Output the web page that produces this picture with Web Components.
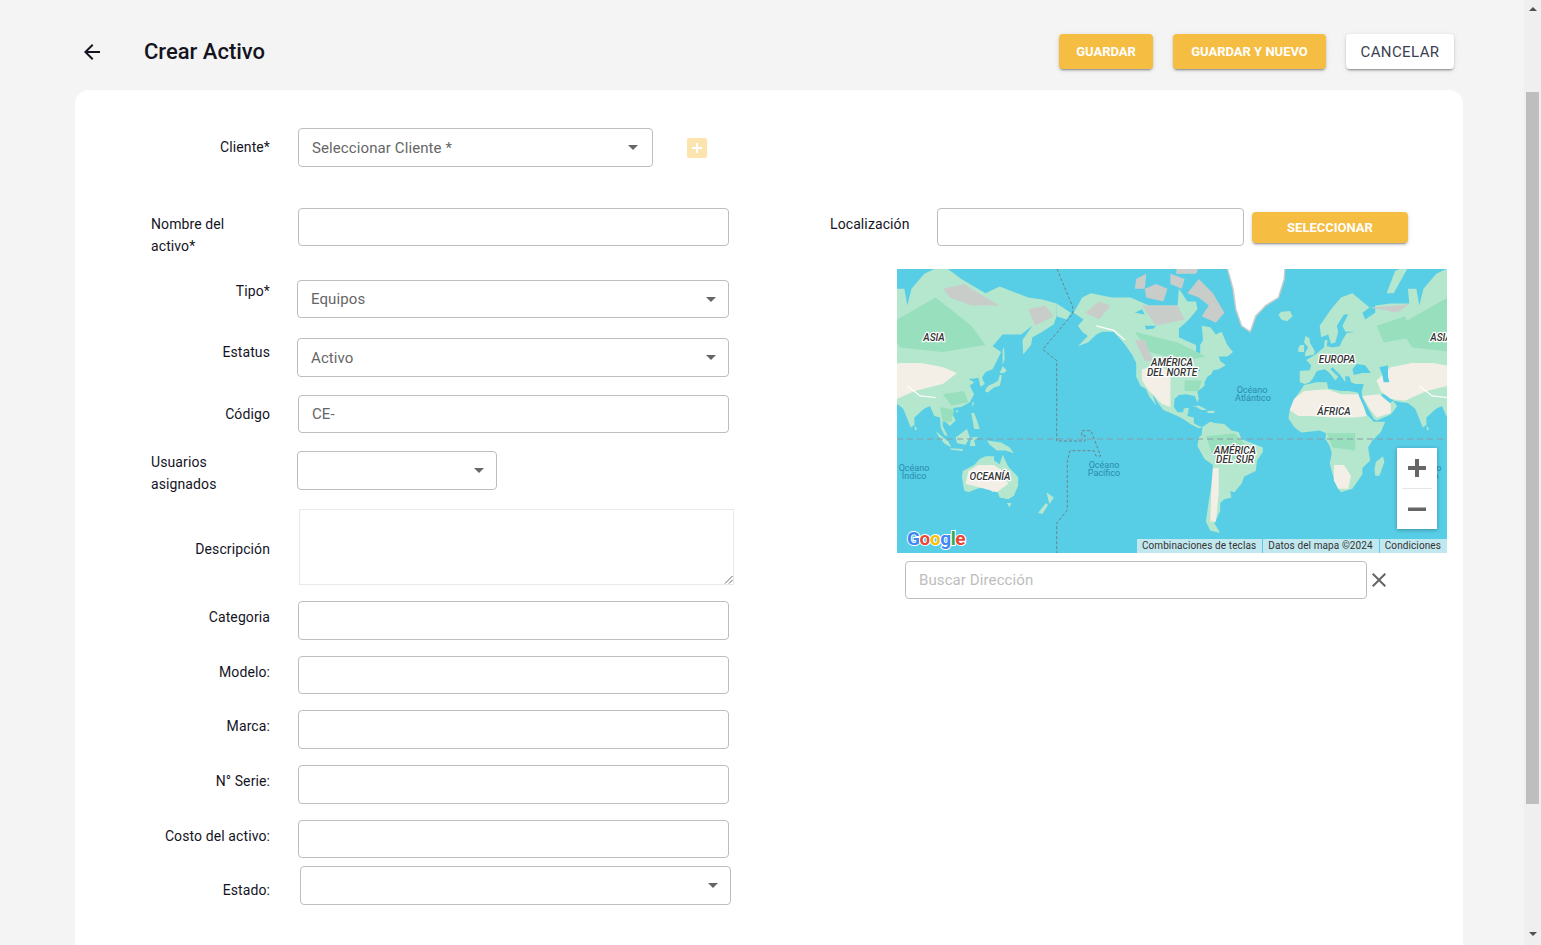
<!DOCTYPE html>
<html lang="es">
<head>
<meta charset="utf-8">
<title>Crear Activo</title>
<style>
  html, body { margin: 0; height: 100%; overflow: hidden; background: #f4f4f4; }
  body { font-family: Roboto, "Liberation Sans", sans-serif; color: #14141f; }
</style>
</head>
<body>
<as-app>
  <as-header slot="header" title="Crear Activo">
    <as-button color="primary" style="--w:94px">GUARDAR</as-button>
    <as-button color="primary" style="--w:153px">GUARDAR Y NUEVO</as-button>
    <as-button style="--w:108px">CANCELAR</as-button>
  </as-header>
  <as-card>
    <div slot="left">
      <as-field label="Cliente*" label-top="8" ctl-left="28">
        <as-select style="--w:355px;--h:39px;--arrow:21px">Seleccionar Cliente *</as-select>
        <as-add-icon></as-add-icon>
      </as-field>
      <as-field label="Nombre del activo*" wrap label-top="5" ctl-left="28" style="--mt:41px">
        <as-input style="--w:431px;--h:38px"></as-input>
      </as-field>
      <as-field label="Tipo*" label-top="0" ctl-left="27" style="--mt:34px">
        <as-select style="--w:432px;--h:38px">Equipos</as-select>
      </as-field>
      <as-field label="Estatus" label-top="3" ctl-left="27" style="--mt:20px">
        <as-select style="--w:432px;--h:39px">Activo</as-select>
      </as-field>
      <as-field label="Código" label-top="8" ctl-left="28" style="--mt:18px">
        <as-input style="--w:431px;--h:38px">CE-</as-input>
      </as-field>
      <as-field label="Usuarios asignados" wrap label-top="0" ctl-left="27" style="--mt:18px">
        <as-select style="--w:200px;--h:39px"></as-select>
      </as-field>
      <as-field label="Descripción" label-top="29" ctl-left="29" style="--mt:19px">
        <as-textarea style="--w:435px;--h:76px"></as-textarea>
      </as-field>
      <as-field label="Categoria" label-top="5" ctl-left="28" style="--mt:16px">
        <as-input style="--w:431px;--h:39px"></as-input>
      </as-field>
      <as-field label="Modelo:" label-top="5" ctl-left="28" style="--mt:16px">
        <as-input style="--w:431px;--h:38px"></as-input>
      </as-field>
      <as-field label="Marca:" label-top="5" ctl-left="28" style="--mt:16px">
        <as-input style="--w:431px;--h:39px"></as-input>
      </as-field>
      <as-field label="N° Serie:" label-top="5" ctl-left="28" style="--mt:16px">
        <as-input style="--w:431px;--h:39px"></as-input>
      </as-field>
      <as-field label="Costo del activo:" label-top="5" ctl-left="28" style="--mt:16px">
        <as-input style="--w:431px;--h:38px"></as-input>
      </as-field>
      <as-field label="Estado:" label-top="13" ctl-left="30" style="--mt:8px">
        <as-select style="--w:431px;--h:39px"></as-select>
      </as-field>
    </div>
    <as-location slot="right"></as-location>
  </as-card>
</as-app>

<script>
// Small helper: every element below is just a template in an open shadow root.
function shadow(el, html) {
  el.attachShadow({ mode: 'open' }).innerHTML = html;
  return el.shadowRoot;
}

class AsApp extends HTMLElement {
  constructor() {
    super();
    shadow(this, `
      <style>
        :host { display: flex; height: 945px; background: #f4f4f4; overflow: hidden; }
        main { flex: 1; min-width: 0; }
        .track { width: 17px; flex: none; background: #efefef; display: flex; flex-direction: column; align-items: center; }
        .up, .down { width: 0; height: 0; border-left: 4px solid transparent; border-right: 4px solid transparent; flex: none; }
        .up { border-bottom: 4px solid #505050; margin-top: 7px; }
        .down { border-top: 4px solid #505050; margin-top: 128px; }
        .thumb { width: 13px; height: 712px; background: #bebebe; margin-top: 81px; flex: none; }
      </style>
      <main><slot name="header"></slot><slot></slot></main>
      <div class="track"><div class="up"></div><div class="thumb"></div><div class="down"></div></div>`);
  }
}

class AsHeader extends HTMLElement {
  constructor() {
    super();
    shadow(this, `
      <style>
        :host { display: flex; align-items: center; box-sizing: border-box; height: 90px; padding: 34px 70px 21px 80px; }
        svg { width: 24px; height: 24px; fill: #14141f; flex: none; }
        h1 { margin: 0 0 0 40px; font: 500 22px/28px Roboto, sans-serif; color: #14141f; }
        .actions { margin-left: auto; display: flex; gap: 20px; }
      </style>
      <svg viewBox="0 0 24 24"><path d="M20 11H7.83l5.59-5.59L12 4l-8 8 8 8 1.41-1.41L7.83 13H20v-2z"/></svg>
      <h1>${this.getAttribute('title')}</h1>
      <div class="actions"><slot></slot></div>`);
  }
}

class AsButton extends HTMLElement {
  constructor() {
    super();
    shadow(this, `
      <style>
        :host { display: inline-flex; align-items: center; justify-content: center; box-sizing: border-box;
          width: var(--w, auto); height: var(--h, 35px); border-radius: 4px; background: #fff; color: #3c4150;
          font: 400 15px Roboto, sans-serif; letter-spacing: .4px;
          box-shadow: 0 3px 1px -2px rgba(0,0,0,.2), 0 2px 2px rgba(0,0,0,.14), 0 1px 5px rgba(0,0,0,.12); }
        :host([color="primary"]) { background: #f5bd41; color: #fff; font-weight: 700; font-size: 13px; letter-spacing: 0; }
      </style>
      <slot></slot>`);
  }
}

class AsCard extends HTMLElement {
  constructor() {
    super();
    shadow(this, `
      <style>
        :host { display: flex; box-sizing: border-box; width: 1388px; height: 900px; margin-left: 75px;
          padding: 38px 0 0 76px; background: #fff; border-radius: 14px 14px 0 0; }
        .left { width: 603px; flex: none; }
        .right { margin: 80px 0 0 76px; flex: none; width: 617px; }
      </style>
      <div class="left"><slot name="left"></slot></div>
      <div class="right"><slot name="right"></slot></div>`);
  }
}

class AsField extends HTMLElement {
  constructor() {
    super();
    const top = this.getAttribute('label-top') || 0;
    const left = this.getAttribute('ctl-left') || 28;
    const wrap = this.hasAttribute('wrap');
    shadow(this, `
      <style>
        :host { display: flex; margin-top: var(--mt, 0); }
        label { flex: none; width: 119px; height: 0; padding-top: ${top}px; text-align: ${wrap ? 'left' : 'right'};
          font: 400 14px/22px Roboto, sans-serif; color: #14141f; letter-spacing: .1px; }
        .ctl { margin-left: ${left}px; display: flex; align-items: center; }
        ${wrap ? 'label span { display: block; width: 90px; }' : ''}
      </style>
      <label><span>${this.getAttribute('label')}</span></label>
      <div class="ctl"><slot></slot></div>`);
  }
}

const BOX = `
  :host { display: flex; align-items: center; box-sizing: border-box; width: var(--w); height: var(--h);
    flex: none; padding: 0 13px; background: #fff; border: 1px solid #bdbdbd; border-radius: 4px;
    font: 400 15px Roboto, sans-serif; color: #666; letter-spacing: .1px; white-space: nowrap; }`;

class AsInput extends HTMLElement {
  constructor() {
    super();
    shadow(this, `<style>${BOX}</style><slot></slot>`);
  }
}

class AsSelect extends HTMLElement {
  constructor() {
    super();
    shadow(this, `
      <style>${BOX}
        .arrow { margin: 0 calc(var(--arrow, 19px) - 19px) 0 auto; width: 0; height: 0; flex: none; position: relative; left: 1px;
          border-left: 5px solid transparent; border-right: 5px solid transparent; border-top: 5px solid #666; }
      </style>
      <slot></slot><span class="arrow"></span>`);
  }
}

class AsTextarea extends HTMLElement {
  constructor() {
    super();
    shadow(this, `
      <style>
        :host { display: block; position: relative; box-sizing: border-box; width: var(--w); height: var(--h);
          background: #fff; border: 1px solid #ece8e8; flex: none; }
        svg { position: absolute; right: 0; bottom: 0; width: 9px; height: 9px; stroke: #666; fill: none; }
      </style>
      <svg viewBox="0 0 9 9"><path d="M1 8.5 8.5 1M5 8.5 8.5 5"/></svg>`);
  }
}

class AsAddIcon extends HTMLElement {
  constructor() {
    super();
    shadow(this, `
      <style>
        :host { display: block; width: 20px; height: 20px; margin-left: 34px; flex: none; background: #fbe4ae; border-radius: 2px; }
        svg { display: block; width: 20px; height: 20px; fill: #fff; }
      </style>
      <svg viewBox="0 0 20 20"><path d="M9 5h2v4h4v2h-4v4H9v-4H5V9h4z"/></svg>`);
  }
}

class AsLocation extends HTMLElement {
  constructor() {
    super();
    shadow(this, `
      <style>
        :host { display: block; }
        .row { display: flex; align-items: flex-start; }
        label { width: 107px; padding-top: 5px; font: 400 14px/22px Roboto, sans-serif; color: #14141f; letter-spacing: .1px; flex: none; }
        as-button { margin: 4px 0 0 8px; }
        as-map { margin: 23px 0 0 67px; }
        .search { display: flex; align-items: center; margin: 8px 0 0 75px; }
        .search as-input { color: #bdbdbd; }
        svg { width: 24px; height: 24px; margin-left: 0; fill: #666; flex: none; }
      </style>
      <div class="row">
        <label>Localización</label>
        <as-input style="--w:307px;--h:38px"></as-input>
        <as-button color="primary" style="--w:156px;--h:31px">SELECCIONAR</as-button>
      </div>
      <as-map></as-map>
      <div class="search">
        <as-input style="--w:462px;--h:38px">Buscar Dirección</as-input>
        <svg viewBox="0 0 24 24"><path d="M19 6.41 17.59 5 12 10.59 6.41 5 5 6.41 10.59 12 5 17.59 6.41 19 12 13.41 17.59 19 19 17.59 13.41 12z"/></svg>
      </div>`);
  }
}

// ── Map data: rough coastlines as [lon, lat], Web Mercator at zoom 1 ─────────
const LAND = [
  // North America
  [[-168,66],[-162,70],[-156,71],[-141,70],[-128,70],[-115,68],[-108,68],[-95,68],[-94,72],[-88,69],[-82,69],[-81,67],[-87,64],[-94,61],[-94,58],[-88,56.5],[-82,55],[-82,52],[-79,51.5],[-79,55],[-77,57],[-78,62],[-72,61.5],[-68,59],[-64,60],[-60,55],[-56,52],[-60,50],[-66,50],[-65,48],[-61,46],[-66,44],[-70,43.5],[-71,41.5],[-74,40],[-76,37],[-76,35],[-81,31.5],[-80,27],[-81,25],[-83,29],[-89,30],[-94,29.5],[-97,27],[-97.5,22],[-95,18.5],[-91,18.5],[-90.5,21],[-87,21.5],[-88,16],[-83.5,15],[-83.5,11],[-80,9],[-77.5,8.5],[-80,7.5],[-85,10],[-91,14],[-95,16],[-105,20],[-109,25],[-113,31],[-110,23],[-115,29],[-117,33],[-121,35],[-124,40],[-124,47],[-127,51],[-133,56],[-140,60],[-148,60],[-152,59],[-158,56],[-165,54.5],[-158,58.5],[-162,60],[-165,62],[-161,64]],
  // South America
  [[-77.5,8.5],[-72,12],[-68,11],[-62,10.5],[-57,6],[-52,5],[-50,0],[-44,-2.5],[-35,-6],[-35,-9],[-39,-15],[-40,-22],[-48,-25.5],[-50,-30],[-55,-35],[-58,-34.5],[-57,-38],[-62,-39],[-65,-41],[-65,-45],[-69,-51],[-65,-55],[-72,-54],[-75,-50],[-73,-40],[-71,-30],[-70,-18],[-76,-14],[-81,-5],[-80,1],[-78,3]],
  // Africa
  [[-6,35.5],[3,37],[10,37],[11,33.5],[20,32],[25,32],[32,31],[33,28],[36,22],[38,17],[43,12],[51,12],[48,5],[42,-1],[39,-6],[40.5,-15],[35,-20],[35,-24],[32,-28],[28,-33],[20,-35],[18,-33],[15,-27],[12,-17],[13.5,-10],[12,-5],[9,0],[9.5,4],[5,6],[-4,5],[-8,4.5],[-13,8.5],[-17,14.5],[-16,20],[-13,27],[-9.5,31]],
  // Eurasia
  [[-9,37],[-9,43],[-2,43.5],[-1,46],[-4.5,48.5],[2,51],[8,54],[8.5,57],[10.5,57],[10,54.5],[14,54],[19,54.5],[21,57],[24,59.5],[30,60],[23,60],[21,62],[25,65.5],[22,65.5],[17,62],[18,60],[16,56],[13,55.5],[11,59],[6,58],[5,62],[13,67],[20,70],[28,71],[40,67.5],[35,66],[37,64],[44,66],[44,68],[55,68.5],[68,68.5],[67,72],[73,72],[75,68],[78,72],[87,75],[100,76.5],[113,74],[130,71],[140,72.5],[160,70],[170,69.5],[180,68.5],[180,65],[178,62.5],[170,60],[163,58],[162,55],[156.5,51],[156,57],[163,62],[155,59],[142,59],[135,54.5],[141,52],[135,44],[130,42.5],[127.5,39.5],[129.5,36],[126.5,34.5],[125,39.5],[121,39],[118,39],[122,37],[119,35],[122,30],[119,25],[113,22],[108,21.5],[106,19],[109,13],[105,9],[103,11],[100,13.5],[100,9],[103.5,2],[101,3],[98.5,8],[98,15],[94,16],[91,22.5],[87,21],[80,15],[80,10],[77.5,8],[73,19],[72,21],[67,24.5],[62,25],[57,26],[56,27],[50,30],[48,30],[51,25],[54,24],[56.5,26],[59.5,22.5],[55,17],[45,13],[43,14],[39,21],[35,28],[34.5,31.5],[36,36],[30,36],[27,37],[26,40],[23,40.5],[23,37],[19.5,41],[14,45],[12.5,44],[18,40],[16,38],[12,42],[8.5,44],[3,43],[0,39],[-2,37],[-5.5,36]],
  [[-180,68.5],[-170,66],[-173,64],[-180,65]],
  // Islands
  [[-24,65.5],[-22,64],[-18,63.5],[-14,65],[-16,66.5],[-22,66.3]],
  [[49.5,-12],[50.5,-16],[47,-25],[44,-25],[43.5,-21],[44.5,-16]],
  [[-5.5,50],[1,51],[1.5,52.5],[-2,56],[-2,57.5],[-5,58.5],[-6,56],[-3,54],[-5,52]],
  [[-10,52],[-6,52],[-6,55],[-8.5,55],[-10,54]],
  [[52,71],[57,71],[68,76.5],[58,75.5]],
  [[130,31.5],[131.5,31],[136,34],[140,35],[141,38],[141.5,41],[140,41],[139,38],[136,36.5],[132,35],[130,33]],
  [[140,42],[142,45.5],[145,43.5],[143,42]],
  [[142,46],[143.5,49],[143,54],[142,53],[142,48]],
  [[120,18],[122,18],[124,13],[126,7],[122,7],[121,13]],
  [[109,1],[117,7],[119,1],[116,-4],[110,-3]],
  [[95,5.5],[104,-2],[106,-6],[101,-3],[97,2]],
  [[105,-6.5],[114,-7],[114,-8.5],[106,-7.5]],
  [[119,-5],[120,1],[125,1.5],[122,-1],[123,-5]],
  [[131,-1],[141,-2.5],[147,-6],[150,-10],[144,-8],[138,-8],[133,-4]],
  [[80,9.5],[82,7],[80.5,6]],
  [[109,20],[111,19.5],[110,18]],
  [[120.5,25],[122,25],[121,22]],
  [[114,-22],[122,-18],[126,-14],[130,-12],[136,-12],[136,-15],[140,-17.5],[142,-11],[146,-19],[153,-26],[153,-31],[150,-37],[146,-39],[140,-38],[138,-34],[135,-35],[131,-31.5],[124,-33],[118,-35],[115,-34],[113.5,-26]],
  [[145,-41],[148,-41],[147,-43.5]],
  [[173,-35],[178,-38],[175,-41.5],[174,-39]],
  [[172.5,-41],[174,-42],[170,-46.5],[167,-46]],
  [[-85,22],[-80,23],[-74,20],[-78,20],[-82,22]],
  [[-74,19.5],[-69,19.5],[-69,18],[-74,18]]
];
const ARCTIC = [
  [[-62,66],[-68,63],[-78,65],[-73,68],[-80,70],[-88,71],[-80,74],[-70,71]],
  [[-117,70],[-105,69],[-102,72],[-110,73],[-118,72]],
  [[-90,76.5],[-78,76.5],[-62,82],[-75,83],[-92,81]],
  [[-125,72],[-118,72],[-117,75],[-124,74]],
  [[-96,75],[-82,75],[-80,76],[-95,77]],
  [[-100,73],[-92,72],[-90,74],[-100,75]],
  [[-120,68],[-95,68],[-90,64],[-110,62]],
  [[100,72],[115,73],[125,71],[140,68],[120,68],[105,70]],
  [[165,62],[178,65],[172,68],[160,67]],
  [[-160,66],[-150,69],[-142,68],[-150,64]],
  [[-125,57],[-118,57],[-112,48],[-118,48]],
  [[40,67.5],[60,68],[68,68.5],[60,66]]
];
const SAND = [
  [[-16,20],[-13,27],[-6,32],[10,33],[20,30],[32,30],[36,22],[38,16],[30,15],[15,15],[0,16],[-10,16]],
  [[15,-28],[15,-18],[22,-18],[27,-25],[25,-33],[18,-33]],
  [[35,29],[47,30],[55,24],[55,18],[45,15],[40,21]],
  [[45,38],[55,45],[70,47],[85,47],[100,45],[110,42],[100,36],[80,32],[65,26],[55,27],[48,32]],
  [[118,-22],[125,-18],[136,-18],[142,-22],[146,-30],[138,-35],[125,-32],[116,-30]],
  [[-120,44],[-108,46],[-100,42],[-100,30],[-100,22],[-106,24],[-115,32],[-120,38]],
  [[-70,-20],[-66,-20],[-66,-35],[-68,-50],[-72,-50],[-71,-30]]
];
const FOREST = [
  [[-75,2],[-55,4],[-48,-3],[-55,-14],[-70,-12]],
  [[10,4],[30,4],[30,-8],[14,-6]],
  [[60,62],[95,70],[120,62],[130,55],[100,52],[70,54]],
  [[-125,60],[-95,56],[-75,50],[-90,48],[-115,52]],
  [[98,22],[108,20],[106,12],[100,12]],
  [[45,62],[65,65],[70,58],[50,56]],
  [[100,30],[115,32],[118,25],[106,23]],
  [[-90,38],[-78,38],[-80,32],[-90,32]]
];
const WATER = [
  [[28,44],[31,46.5],[37,46],[41,42],[35,42],[29,41]],
  [[47,45],[53,46],[53,40],[54,37],[50,37],[49,41]],
  [[-92,47],[-85,48],[-84,46],[-88,44],[-87,42],[-86,45],[-90,46]],
  [[-83,45],[-80,44.5],[-79,43],[-82,43]],
  [[-118,62],[-110,62],[-112,61],[-117,60.8]],
  [[-125,66],[-120,67],[-118,65.5]]
];
const GREENLAND = [[-44,60],[-50,62],[-54,67],[-56,72],[-60,76],[-72,78],[-60,82],[-30,84],[-18,80],[-20,74],[-24,70],[-33,68],[-40,65],[-43,61]];

// lon/lat to map px. lon 180 sits 159.6px in from the left edge of the frame.
const px = ([lon, lat]) => {
  const r = lat * Math.PI / 180;
  const x = (lon + 180) * 512 / 360 + 159.6;
  const y = 170 - Math.log(Math.tan(Math.PI / 4 + r / 2)) * 256 / Math.PI;
  return x.toFixed(1) + ' ' + y.toFixed(1);
};
const toPath = (list) => list.map((p) => 'M' + p.map(px).join('L') + 'Z').join('');

class AsMap extends HTMLElement {
  constructor() {
    super();
    const layers = `
      <path fill="#b5e7cf" d="${toPath(LAND)}"/>
      <path fill="#97dfbd" d="${toPath(FOREST)}"/>
      <path fill="#f4efe6" d="${toPath(SAND)}"/>
      <path fill="#c8cdca" d="${toPath(ARCTIC)}"/>
      <path fill="#fff" stroke="#c8cdca" stroke-width="1.5" d="${toPath([GREENLAND])}"/>
      <path fill="#57cde6" d="${toPath(WATER)}"/>
      <path fill="none" stroke="#fff" stroke-width="1.2" d="M${[[75,35],[84,29],[95,28]].map(px).join('L')}M${[[-152,62],[-140,60.5],[-132,57]].map(px).join('L')}"/>`;
    shadow(this, `
      <style>
        :host { display: block; position: relative; width: 550px; height: 284px; background: #57cde6; overflow: hidden; }
        svg { display: block; }
        text { font-family: Roboto, sans-serif; }
        .c { font-size: 10px; font-style: italic; font-weight: 500; fill: #333; stroke: #fff; stroke-width: 2.5px; paint-order: stroke; text-anchor: middle; stroke-linejoin: round; }
        .o { font-size: 9px; fill: #2a8cac; text-anchor: middle; }
        .g { font-size: 19px; font-weight: 700; stroke: #fff; stroke-width: 2px; paint-order: stroke; letter-spacing: -.4px; }
        .attr { position: absolute; right: 0; bottom: 0; height: 14px; display: flex; gap: 1px;
          font: 400 10px/14px Roboto, sans-serif; color: #333; letter-spacing: .1px; white-space: nowrap; }
        .attr span { background: #c2e8ef; padding: 0 6px 0 5px; }
        .zoom { position: absolute; left: 500px; top: 179px; width: 40px; height: 81px; background: #fff;
          box-shadow: 0 1px 4px rgba(0,0,0,.3); display: flex; flex-direction: column; align-items: center; }
        .zoom svg { width: 40px; height: 40px; fill: #666; flex: none; }
        .zoom i { width: 30px; height: 1px; background: #e6e6e6; flex: none; }
      </style>
      <svg width="550" height="284" viewBox="0 0 550 284">
        <defs><filter id="soft" x="-5%" y="-5%" width="110%" height="110%"><feGaussianBlur stdDeviation=".45"/></filter></defs>
        <g filter="url(#soft)"><g>${layers}</g><g transform="translate(-512 0)">${layers}</g></g>
        <path d="M0 170H550" stroke="#8b9ba3" stroke-width="1.2" stroke-dasharray="6 4" fill="none"/>
        <path d="M160 0 175.7 37.7V45L145.7 80.3 159.7 91.7V172H188V166.7H184.7V161.7H194L203.7 187H199L197 181.7H173L170.3 192.7V241L159.7 254.3V284" stroke="#6f7a80" stroke-width=".9" stroke-dasharray="3 2" fill="none"/>
        <text class="c" x="37" y="72">ASIA</text>
        <text class="c" x="544" y="72">ASIA</text>
        <text class="c" x="275" y="97">AMÉRICA</text>
        <text class="c" x="275" y="107">DEL NORTE</text>
        <text class="c" x="440" y="94">EUROPA</text>
        <text class="c" x="437" y="146">ÁFRICA</text>
        <text class="c" x="338" y="185">AMÉRICA</text>
        <text class="c" x="338" y="194">DEL SUR</text>
        <text class="c" x="93" y="211">OCEANÍA</text>
        <text class="o" x="355" y="124">Océano</text>
        <text class="o" x="356" y="132">Atlántico</text>
        <text class="o" x="17" y="202">Océano</text>
        <text class="o" x="17" y="210">Índico</text>
        <text class="o" x="529" y="202">Océano</text>
        <text class="o" x="529" y="210">Índico</text>
        <text class="o" x="207" y="199">Océano</text>
        <text class="o" x="207" y="207">Pacífico</text>
        <text class="g" x="10" y="276"><tspan fill="#4285f4">G</tspan><tspan fill="#ea4335">o</tspan><tspan fill="#fbbc05">o</tspan><tspan fill="#4285f4">g</tspan><tspan fill="#34a853">l</tspan><tspan fill="#ea4335">e</tspan></text>
      </svg>
      <div class="zoom">
        <svg viewBox="0 0 40 40"><path d="M18 11h4v7h7v4h-7v7h-4v-7h-7v-4h7z"/></svg>
        <i></i>
        <svg viewBox="0 0 40 40"><path d="M11 18.500h18v3.500H11z"/></svg>
      </div>
      <div class="attr"><span>Combinaciones de teclas</span><span>Datos del mapa ©2024</span><span>Condiciones</span></div>`);
  }
}

customElements.define('as-app', AsApp);
customElements.define('as-header', AsHeader);
customElements.define('as-button', AsButton);
customElements.define('as-card', AsCard);
customElements.define('as-field', AsField);
customElements.define('as-input', AsInput);
customElements.define('as-select', AsSelect);
customElements.define('as-textarea', AsTextarea);
customElements.define('as-add-icon', AsAddIcon);
customElements.define('as-map', AsMap);
customElements.define('as-location', AsLocation);
</script>
</body>
</html>
